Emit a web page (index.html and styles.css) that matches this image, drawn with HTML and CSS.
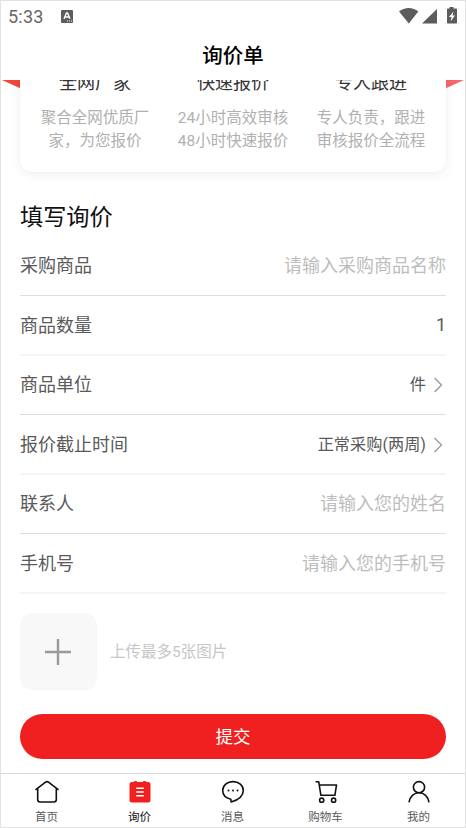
FILE: index.html
```html
<!DOCTYPE html>
<html lang="zh-CN">
<head>
<meta charset="utf-8">
<title>询价单</title>
<link rel="stylesheet" href="styles.css">
</head>
<body>
<div class="screen">
  <div class="status">
    <span class="time">5:33</span>
    <svg class="ime" width="12" height="13" viewBox="0 0 12 13"><rect width="12" height="13" rx="1" fill="#5c5c5c"/><path d="M3 8.800 5.500 3h1L9 8.800M4 7h4" fill="none" stroke="#fff" stroke-width="1.400"/><path d="M6 11h1m1 0h1m1 0h1" stroke="#fff"/></svg>
    <svg class="signals" width="60" height="18" viewBox="0 0 60 18"><path d="M0 4.500C5.500-.2 14-.2 19.300 4.500L9.800 16.500Z" fill="#5c5c5c"/><path d="M38 2v14.500H23Z" fill="#5c5c5c"/><path d="M50.500 0h4v1.500H57q1 0 1 1V15.500q0 1-1 1H49q-1 0-1-1V2.500q0-1 1-1h1.500Z" fill="#5c5c5c"/><path d="M54.500 4.500 50 10h2.500l-1 4.500L56 8.500h-2.500Z" fill="#fff"/></svg>
  </div>
  <header class="title">询价单</header>
  <main class="content">
    <section class="intro">
      <svg class="wedge" width="464" height="10" viewBox="0 0 464 10"><path d="M1 0H22V9.500Z" fill="#f0473f"/><path d="M463 0H442V9.500Z" fill="#f4686a"/></svg>
      <div class="card">
        <div class="feature"><h3>全网厂家</h3><p>聚合全网优质厂<br>家，为您报价</p></div>
        <div class="feature"><h3>快速报价</h3><p>24小时高效审核<br>48小时快速报价</p></div>
        <div class="feature"><h3>专人跟进</h3><p>专人负责，跟进<br>审核报价全流程</p></div>
      </div>
    </section>
    <section class="form">
      <h2>填写询价</h2>
      <div class="row"><span>采购商品</span><span class="hint">请输入采购商品名称</span></div>
      <div class="row"><span>商品数量</span><span class="num">1</span></div>
      <div class="row"><span>商品单位</span><span class="pick">件<svg width="10" height="16" viewBox="0 0 10 16"><path d="M1.500 1 8.500 8l-7 7"/></svg></span></div>
      <div class="row"><span>报价截止时间</span><span class="pick">正常采购(两周)<svg width="10" height="16" viewBox="0 0 10 16"><path d="M1.500 1 8.500 8l-7 7"/></svg></span></div>
      <div class="row"><span>联系人</span><span class="hint">请输入您的姓名</span></div>
      <div class="row"><span>手机号</span><span class="hint">请输入您的手机号</span></div>
      <div class="upload">
        <div class="add"><svg width="26" height="26" viewBox="0 0 26 26"><path d="M13 0v26M0 13h26" stroke="#999" stroke-width="2.400"/></svg></div>
        <span>上传最多5张图片</span>
      </div>
      <button class="submit">提交</button>
    </section>
  </main>
  <nav class="tabs">
    <a><svg width="26" height="24" viewBox="0 0 26 24"><path d="M1.500 9.800 11.200 2.300q1.800-1.300 3.600 0L24.500 9.800M3.700 8.700V19.500q0 2.500 2.500 2.500H19.800q2.500 0 2.500-2.500V8.700"/></svg>首页</a>
    <a class="on"><svg width="26" height="24" viewBox="0 0 26 24"><path class="solid" d="M5 2h2.200v-1h2.600v1h6.400v-1h2.600v1H21q2.500 0 2.500 2.500v15.500q0 2.500-2.500 2.500H5q-2.500 0-2.500-2.500v-15.500Q2.500 2 5 2Z"/><path class="lines" d="M9.200 8.200h7.600M9.200 12h7.600M9.200 15.800h7.600"/></svg>询价</a>
    <a><svg width="26" height="24" viewBox="0 0 26 24"><path d="M10.800 19.200C6 18.200 2.700 15 2.700 10.600 2.700 5.300 7.200 1.600 13 1.600s10.300 3.800 10.300 8.800c0 5.700-5.300 9.500-12.100 11.600Z"/><path class="dots" d="M8.500 10.500h0M13 10.500h0M17.500 10.500h0"/></svg>消息</a>
    <a><svg width="26" height="24" viewBox="0 0 26 24"><path d="M2.500 1.700h3.200l2.200 13.600h14L23.500 5H6.300"/><circle cx="8.700" cy="20.200" r="2.100"/><circle cx="20.600" cy="20.200" r="2.100"/></svg>购物车</a>
    <a><svg width="26" height="24" viewBox="0 0 26 24"><circle cx="13" cy="7.200" r="5.600"/><path d="M3 22.300C3.800 16.400 8 12.800 13 12.800s9.200 3.600 10 9.500"/></svg>我的</a>
  </nav>
</div>
</body>
</html>
```
FILE: styles.css
```css
* { box-sizing: border-box; margin: 0; padding: 0; }
body {
  font-family: Roboto, "Noto Sans CJK SC", sans-serif;
  color: #5a5a5a;
  background: #fff;
}
.screen {
  width: 466px;
  height: 828px;
  border: 1px solid #e2e2e2;
  display: flex;
  flex-direction: column;
  overflow: hidden;
}
.status {
  height: 31px;
  padding: 0 7px;
  display: flex;
  align-items: center;
  flex: none;
}
.time { font-size: 18px; color: #666; width: 53px; letter-spacing: .2px; padding-bottom: 1px; }
.ime { margin-top: -1px; }
.signals { margin-left: auto; margin-right: -1px; margin-top: -2px; }
.title {
  height: 48px;
  flex: none;
  font-size: 20.500px;
  font-weight: 500;
  line-height: 49px;
  text-align: center;
  color: #000;
}
.content { flex: 1; min-height: 0; overflow: hidden; }
.intro { height: 120px; display: grid; }
.wedge, .card { grid-area: 1 / 1; }
.card {
  height: 112px;
  margin: -20px 19px 0;
  padding: 0 6px;
  border-radius: 13px;
  background: #fff;
  box-shadow: 0 2px 12px rgba(0, 0, 0, .07);
  display: grid;
  grid-template-columns: repeat(3, 1fr);
  text-align: center;
}
.feature h3 { font-size: 18px; font-weight: 400; line-height: 26px; margin-top: 10px; color: #333; }
.feature p { font-size: 15.500px; line-height: 23.300px; margin-top: 10.500px; color: #b0b0b0; }
.form { padding: 0 19px; }
.form h2 { font-size: 23.200px; font-weight: 400; line-height: 35px; height: 37px; color: #111; }
.row {
  height: 60px;
  display: flex;
  align-items: center;
  justify-content: space-between;
  font-size: 18px;
  padding-bottom: 2px;
  border-bottom: 1px solid #dedede;
}
.row:nth-of-type(even) { border-bottom: 2px solid #f5f5f5; }
.row:nth-of-type(odd) { height: 59px; padding-bottom: 4px; }
.hint { color: #bdbdbd; }
.pick { display: flex; align-items: center; gap: 7px; font-size: 16.200px; padding-right: 3px; }
.pick svg { margin-top: 3px; }
.pick path { fill: none; stroke: #999; stroke-width: 1.300; }
.upload { display: flex; align-items: center; gap: 13px; margin-top: 19px; font-size: 15.500px; color: #c6c6c6; }
.upload span { padding-bottom: 4px; }
.add {
  width: 77px;
  height: 77px;
  padding-right: 1px;
  border-radius: 12px;
  background: #f8f8f8;
  display: grid;
  place-items: center;
}
.submit {
  display: block;
  width: 100%;
  height: 45px;
  margin-top: 24px;
  padding-bottom: 2px;
  border: 0;
  border-radius: 23px;
  background: #f02020;
  color: #fff;
  font: inherit;
  font-size: 17.500px;
}
.tabs {
  height: 54px;
  flex: none;
  border-top: 1px solid #dadada;
  display: grid;
  grid-template-columns: repeat(5, 93px);
  margin-left: -1px;
}
.tabs a {
  display: flex;
  flex-direction: column;
  align-items: center;
  padding-top: 6px;
  font-size: 11.500px;
  line-height: 17px;
  gap: 5px;
}
.tabs .on { color: #111; }
.tabs path, .tabs circle { fill: none; stroke: #111; stroke-width: 1.600; stroke-linejoin: round; }
.tabs .solid { fill: #f02020; stroke: none; }
.tabs .lines { stroke: #fff; }
.tabs .dots { stroke-linecap: round; stroke-width: 2; }
```
